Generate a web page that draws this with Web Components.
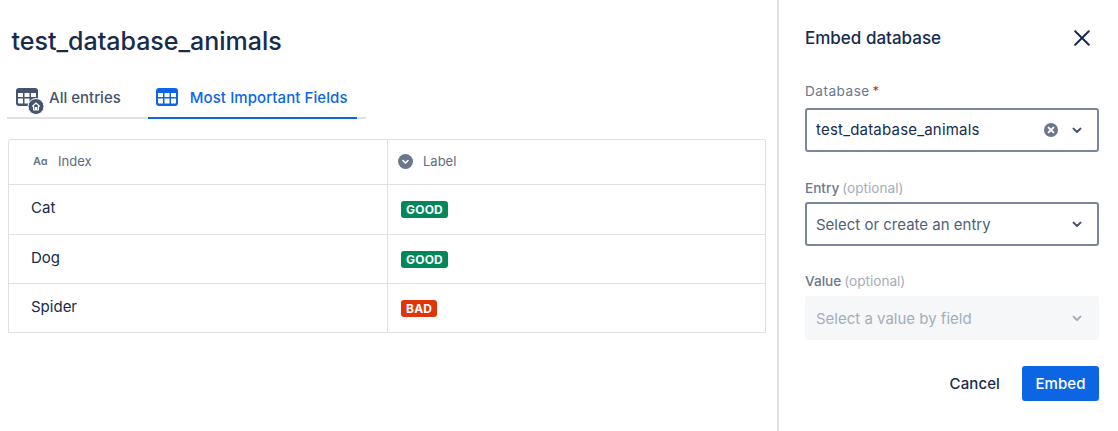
<!DOCTYPE html>
<html>
<head>
<meta charset="utf-8">
<title>Embed database</title>
<style>
    html, body { margin: 0; height: 100%; background: #fff; }
    body { font-family: Inter, "Liberation Sans", sans-serif; color: #172b4d; overflow: hidden; }
</style>
</head>
<body>
<embed-page>
    <database-view slot="main" name="test_database_animals"></database-view>
    <embed-panel slot="side"></embed-panel>
</embed-page>

<script>
// --- Shared icons ---
const CHEVRON = `<svg width="10" height="7" viewBox="0 0 10 7"><path d="M1.5 1.6 5 5l3.5-3.4" fill="none" stroke="currentColor" stroke-width="2" stroke-linecap="round" stroke-linejoin="round"/></svg>`;
const CLEAR = `<svg width="14" height="14" viewBox="0 0 14 14"><circle cx="7" cy="7" r="7" fill="#6b778c"/><path d="M4.6 4.6l4.8 4.8M9.4 4.6 4.6 9.4" stroke="#fff" stroke-width="2" stroke-linecap="round"/></svg>`;

// --- Page shell ---
class EmbedPage extends HTMLElement {
    constructor() {
        super();
        this.attachShadow({ mode: 'open' });
        this.shadowRoot.innerHTML = `
            <style>
                :host { display: grid; grid-template-columns: 777px 341px; height: 431px; }
                .main { min-width: 0; }
                .side { border-left: 2px solid #dfe1e6; min-width: 0; }
            </style>
            <div class="main"><slot name="main"></slot></div>
            <div class="side"><slot name="side"></slot></div>
        `;
    }
}
customElements.define('embed-page', EmbedPage);

// --- Tabs ---
class ViewTab extends HTMLElement {
    constructor() {
        super();
        this.attachShadow({ mode: 'open' });
    }

    connectedCallback() {
        const active = this.hasAttribute('active');
        const icon = active
            ? `<svg width="22" height="18" viewBox="0 0 22 18"><rect width="22" height="18" rx="3" fill="#0c66e4"/><path d="M2 5h5v4H2zM8.5 5h5v4h-5zM15 5h5v4h-5zM2 10.5h5V15.5H3a1 1 0 0 1-1-1zM8.5 10.5h5v5h-5zM15 10.5h5v4a1 1 0 0 1-1 1h-4z" fill="#fff"/></svg>`
            : `<svg width="28" height="28" viewBox="0 0 28 28"><rect width="22" height="18" rx="3" fill="#44546f"/><path d="M2 5h5v4H2zM8.5 5h5v4h-5zM15 5h5v4h-5zM2 10.5h5V15.5H3a1 1 0 0 1-1-1zM8.5 10.5h5v5h-5z" fill="#fff"/><circle cx="20" cy="18.5" r="8" fill="#44546f" stroke="#fff" stroke-width="1"/><path d="M16.3 18.5 20 15l3.7 3.5M17.6 18v4h1.8v-2.3h1.2V22h1.8v-4" fill="none" stroke="#fff" stroke-width="1.2" stroke-linejoin="round"/></svg>`;
        this.shadowRoot.innerHTML = `
            <style>
                :host { display: block; font-size: 15px; font-weight: 500; margin-bottom: -2px; }
                .tab { display: flex; align-items: center; box-sizing: border-box; height: 36px; padding-bottom: 6px !important; border-bottom: 2px solid transparent; color: #44546f; }
                .icon { display: flex; height: 18px; align-items: flex-start; }
                :host([active]) .tab { color: #0c66e4; border-bottom-color: #0c66e4; padding: 0 9px 0 8px; letter-spacing: .08px; }
                :host([active]) .icon { width: 34px; }
                :host(:not([active])) .tab { padding: 0 27px 0 9px; }
                :host(:not([active])) .icon { width: 33px; }
            </style>
            <div class="tab"><span class="icon">${icon}</span><slot></slot></div>
        `;
    }
}
customElements.define('view-tab', ViewTab);

// --- Lozenge ---
class StatusLozenge extends HTMLElement {
    constructor() {
        super();
        this.attachShadow({ mode: 'open' });
        this.shadowRoot.innerHTML = `
            <style>
                :host { display: inline-block; background: var(--bg, #00875a); color: #fff; font-size: 12px; font-weight: 700;
                    line-height: 17px; height: 17px; padding: 0 5px; border-radius: 3px; letter-spacing: .2px; }
            </style>
            <slot></slot>
        `;
    }
}
customElements.define('status-lozenge', StatusLozenge);

// --- Table on the left ---
class DatabaseView extends HTMLElement {
    constructor() {
        super();
        this.attachShadow({ mode: 'open' });
    }

    connectedCallback() {
        const rows = [
            ['Cat', 'GOOD', '#00875a', 50],
            ['Dog', 'GOOD', '#00875a', 49],
            ['Spider', 'BAD', '#de350b', 49]
        ];
        const rowHtml = rows.map(r => `
            <div class="cell name" style="height:${r[3]}px">${r[0]}</div>
            <div class="cell status" style="height:${r[3]}px"><status-lozenge style="--bg:${r[2]}">${r[1]}</status-lozenge></div>
        `).join('');

        this.shadowRoot.innerHTML = `
            <style>
                :host { display: block; padding: 24px 11px 0 8px; }
                h1 { margin: 0 0 0 3.5px; font-size: 25px; line-height: 34px; font-weight: 500; color: #172b4d; }
                .tabs { display: flex; width: 359px; margin: 25px 0 20px -1px; border-bottom: 2px solid #dfe1e6; height: 34px; align-items: flex-end; }
                .table { display: grid; grid-template-columns: 378px 1fr; border: 1px solid #dfe1e6; border-radius: 3px 3px 0 0; }
                .cell { display: flex; align-items: center; border-top: 1px solid #dfe1e6; font-size: 15px; color: #172b4d; box-sizing: border-box; }
                .head { height: 44px; padding-bottom: 2px; border-top: 0; font-size: 13px; color: #5e6c84; }
                .cell.name { padding-left: 22px; padding-bottom: 4px; }
                .status { border-left: 1px solid #dfe1e6; padding-left: 13px; }
                .aa { font-size: 11px; font-weight: 600; color: #6b778c; width: 25px; margin-left: 2px; letter-spacing: -.3px; }
                .head.first { padding-left: 22px; }
                .head.second { border-left: 1px solid #dfe1e6; padding-left: 10px; }
                .head svg { margin-right: 10px; }
            </style>
            <h1>${this.getAttribute('name')}</h1>
            <div class="tabs">
                <view-tab>All entries</view-tab>
                <view-tab active>Most Important Fields</view-tab>
            </div>
            <div class="table">
                <div class="cell head first"><span class="aa">Aɑ</span>Index</div>
                <div class="cell head second">
                    <svg width="15" height="15" viewBox="0 0 15 15"><circle cx="7.5" cy="7.5" r="7.5" fill="#6b778c"/><path d="M5 6.5 7.5 9 10 6.5" fill="none" stroke="#fff" stroke-width="1.6" stroke-linecap="round" stroke-linejoin="round"/></svg>
                    Label
                </div>
                ${rowHtml}
            </div>
        `;
    }
}
customElements.define('database-view', DatabaseView);

// --- Form field ---
class SelectField extends HTMLElement {
    constructor() {
        super();
        this.attachShadow({ mode: 'open' });
    }

    connectedCallback() {
        const label = this.getAttribute('label');
        const hint = this.getAttribute('hint');
        const value = this.getAttribute('value');
        const placeholder = this.getAttribute('placeholder');
        this.shadowRoot.innerHTML = `
            <style>
                :host { display: block; }
                .label { box-sizing: border-box; height: 25px; padding-bottom: var(--label-gap, 6px); display: flex; align-items: flex-end; gap: 3px; font-size: 13.6px; font-weight: var(--label-weight, 500); letter-spacing: var(--label-spacing, 0); line-height: 16px; color: #6b778c; }
                .hint { font-weight: 400; color: #a5adba; }
                .req { color: #bf2600; font-size: 12px; }
                .box { display: flex; align-items: center; box-sizing: border-box; height: 44px; border: 2px solid #7a869a; border-radius: 3px;
                    padding: 0 15px 0 9px; font-size: 15px; color: #172b4d; }
                .text { flex: 1; }
                .filled { letter-spacing: .2px; padding-bottom: 1px; }
                .placeholder { color: #505f79; }
                .clear { display: flex; margin-right: 14px; }
                .arrow { display: flex; color: #42526e; }
                :host([disabled]) .box { background: #f6f7f8; border-color: #f6f7f8; }
                :host([disabled]) .text { color: #a5adba; }
                :host([disabled]) .arrow { color: #a5adba; }
            </style>
            <div class="label"><span>${label}</span>${hint ? `<span class="hint">${hint}</span>` : ''}${this.hasAttribute('required') ? '<span class="req">*</span>' : ''}</div>
            <div class="box">
                <span class="text ${value ? 'filled' : 'placeholder'}">${value || placeholder}</span>
                ${value ? `<span class="clear">${CLEAR}</span>` : ''}
                <span class="arrow">${CHEVRON}</span>
            </div>
        `;
    }
}
customElements.define('select-field', SelectField);

// --- Side panel ---
class EmbedPanel extends HTMLElement {
    constructor() {
        super();
        this.attachShadow({ mode: 'open' });
        this.shadowRoot.innerHTML = `
            <style>
                :host { display: block; padding: 27px 19px 0 26px; }
                header { display: flex; justify-content: space-between; align-items: center; height: 22px; margin-bottom: 34px; }
                h2 { margin: 0; font-size: 17px; font-weight: 500; color: #172b4d; }
                .close { display: flex; margin-right: 9px; }
                .fields { display: flex; flex-direction: column; gap: 25px; }
                footer { display: flex; justify-content: flex-end; align-items: center; margin-top: 26px; font-size: 15px; font-weight: 500; letter-spacing: .1px; }
                .cancel { color: #172b4d; margin-right: 22px; }
                .embed { display: flex; align-items: center; justify-content: center; width: 77px; height: 35px; background: #0c66e4; color: #fff; border-radius: 3px; }
            </style>
            <header>
                <h2>Embed database</h2>
                <span class="close"><svg width="16" height="16" viewBox="0 0 16 16"><path d="M1.2 1.2l13.6 13.6M14.8 1.2 1.2 14.8" stroke="#172b4d" stroke-width="2" stroke-linecap="round"/></svg></span>
            </header>
            <div class="fields">
                <select-field style="--label-gap:9px;--label-weight:400;--label-spacing:.5px" label="Database" required value="test_database_animals"></select-field>
                <select-field label="Entry" hint="(optional)" placeholder="Select or create an entry"></select-field>
                <select-field style="--label-gap:7px" label="Value" hint="(optional)" placeholder="Select a value by field" disabled></select-field>
            </div>
            <footer><span class="cancel">Cancel</span><span class="embed">Embed</span></footer>
        `;
    }
}
customElements.define('embed-panel', EmbedPanel);
</script>
</body>
</html>
